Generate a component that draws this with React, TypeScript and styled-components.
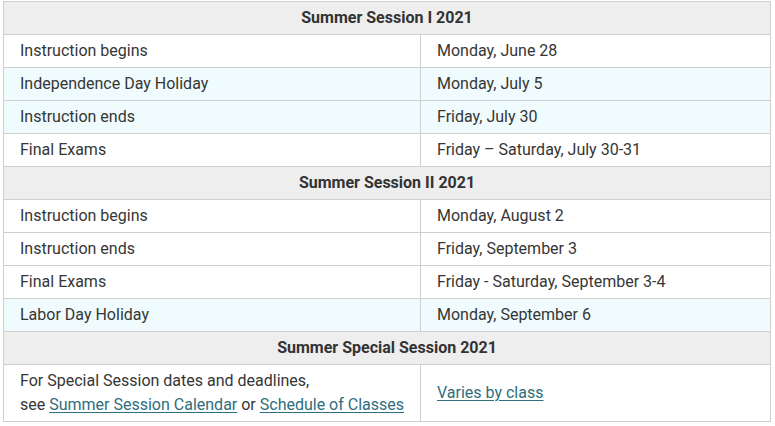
import React from "react";
import styled, { createGlobalStyle } from "styled-components";

const Global = createGlobalStyle`
  html, body { margin: 0; padding: 0; background: #ffffff; }
  body { font-family: Roboto, "Liberation Sans", Arial, sans-serif; }
`;

const Wrap = styled.div`
  padding: 1px 4px 0 3px;
`;

const Table = styled.table`
  width: 768px;
  border-collapse: collapse;
  table-layout: fixed;
  font-size: 16px;
  line-height: 24px;
  color: #363636;
`;

const Row = styled.tr<{ $tint?: boolean }>`
  background: ${(p) => (p.$tint ? "#effbfd" : "#ffffff")};
`;

const Head = styled.th`
  background: #eeeeee;
  border: 1px solid #cfcfcf;
  padding: 4px 16px;
  font-weight: 700;
  text-align: center;
  color: #333333;
`;

const Cell = styled.td`
  border: 1px solid #cfcfcf;
  padding: 4px 16px;
  vertical-align: middle;
  white-space: nowrap;
  overflow: visible;
`;

const Link = styled.a`
  color: #2f6e7c;
  text-decoration: underline;
  text-underline-offset: 2px;
`;

type Item = { label: string; date: string; tint?: boolean };

const s1: Item[] = [
  { label: "Instruction begins", date: "Monday, June 28" },
  { label: "Independence Day Holiday", date: "Monday, July 5", tint: true },
  { label: "Instruction ends", date: "Friday, July 30", tint: true },
  { label: "Final Exams", date: "Friday – Saturday, July 30-31" },
];

const s2: Item[] = [
  { label: "Instruction begins", date: "Monday, August 2" },
  { label: "Instruction ends", date: "Friday, September 3" },
  { label: "Final Exams", date: "Friday - Saturday, September 3-4" },
  { label: "Labor Day Holiday", date: "Monday, September 6", tint: true },
];

const Section = ({ title, items }: { title: string; items: Item[] }) => (
  <>
    <tr>
      <Head colSpan={2}>{title}</Head>
    </tr>
    {items.map((it, i) => (
      <Row key={i} $tint={it.tint}>
        <Cell>{it.label}</Cell>
        <Cell>{it.date}</Cell>
      </Row>
    ))}
  </>
);

export default function App() {
  return (
    <>
      <Global />
      <Wrap>
        <Table>
          <colgroup>
            <col style={{ width: 417 }} />
            <col />
          </colgroup>
          <tbody>
            <Section title="Summer Session I 2021" items={s1} />
            <Section title="Summer Session II 2021" items={s2} />
            <tr>
              <Head colSpan={2}>Summer Special Session 2021</Head>
            </tr>
            <Row>
              <Cell>
                For Special Session dates and deadlines,
                <br />
                see <Link href="#">Summer Session Calendar</Link> or{" "}
                <Link href="#">Schedule of Classes</Link>
              </Cell>
              <Cell>
                <Link href="#">Varies by class</Link>
              </Cell>
            </Row>
          </tbody>
        </Table>
      </Wrap>
    </>
  );
}
